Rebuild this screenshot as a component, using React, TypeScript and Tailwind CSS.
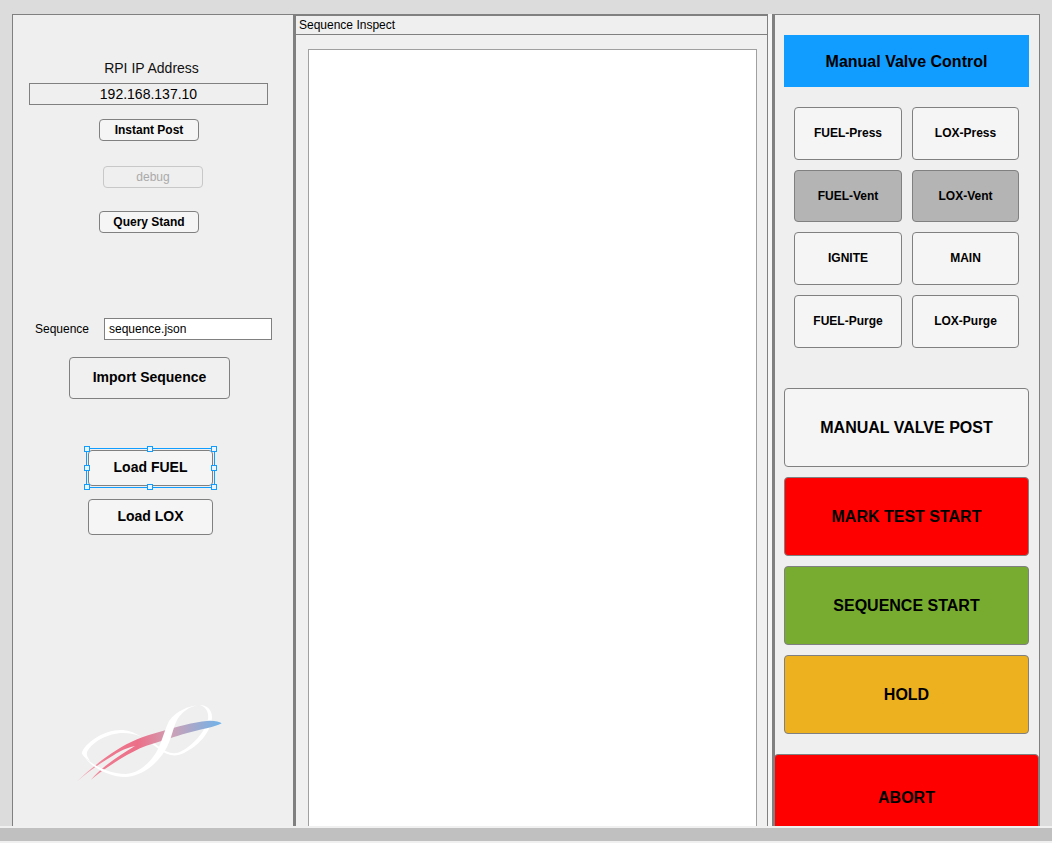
import React from 'react';

const valves = [
  { label: 'FUEL-Press', active: false, h: 'h-[53px] pb-[1px]' },
  { label: 'LOX-Press', active: false, h: 'h-[53px] pb-[1px]' },
  { label: 'FUEL-Vent', active: true, h: 'h-[52px]' },
  { label: 'LOX-Vent', active: true, h: 'h-[52px]' },
  { label: 'IGNITE', active: false, h: 'h-[53px] pb-[1px]' },
  { label: 'MAIN', active: false, h: 'h-[53px] pb-[1px]' },
  { label: 'FUEL-Purge', active: false, h: 'h-[53px] pb-[1px]' },
  { label: 'LOX-Purge', active: false, h: 'h-[53px] pb-[1px]' },
];

// selection handles around the Load FUEL button
const handles = [
  'left-[-3px] top-[-3px]',
  'left-[60px] top-[-3px]',
  'right-[-3px] top-[-3px]',
  'left-[-3px] top-[16px]',
  'right-[-3px] top-[16px]',
  'left-[-3px] bottom-[-3px]',
  'left-[60px] bottom-[-3px]',
  'right-[-3px] bottom-[-3px]',
];

const Logo = () => (
  <svg width="146" height="78" viewBox="0 0 146 78" className="block">
    <defs>
      <linearGradient id="swoosh" x1="0" y1="0" x2="1" y2="0">
        <stop offset="0.03" stopColor="#f4b0bd" />
        <stop offset="0.2" stopColor="#ee7a90" />
        <stop offset="0.42" stopColor="#ec6f88" />
        <stop offset="0.65" stopColor="#cfa0b5" />
        <stop offset="1" stopColor="#6db3ea" />
      </linearGradient>
    </defs>
    {/* thin part of the figure of eight */}
    <path
      d="M5.7 48 C9 38 28 24 47 25 C60 26 72 36 84 45 C92 51 100 52 108 48 C122 41 135 28 136 12 C136 4 130 0 124 0 C130 2 133 7 132 14 C129 28 116 41 104 47 C96 50 90 47 82 41 C70 32 58 28 47 28 C32 28 16 37 11 47 C10 50 12 53 14 56 C9 53 7 51 5.7 48 Z"
      fill="#ffffff"
    />
    {/* pink to blue swoosh */}
    <path
      d="M0.7 76.7 C12 66 26 54 40.7 45 C52 37 68 31 84 26.7 C100 22 118 17 131 16 C138 15.5 143 16.5 145.7 18.3 C142 20.5 136 22 130.7 23.3 C118 26 104 30 94 33.3 C82 37 72 40 64 43.3 C50 50 30 62 14.7 75 C24 64 40 52 59 41 C50 43 44 46 38 50 C24 58 12 67 0.7 76.7 Z"
      fill="url(#swoosh)"
    />
    {/* thick stroke of the eight, crosses over the swoosh */}
    <path
      d="M124 0 C113 1 106 7 101 15 C97 23 96 32 91 42 C84 56 68 71 50 72 C34 72 18 64 9 53 C20 62 34 69 50 69 C64 68 76 56 82 44 C86 36 89 24 93 16 C100 6 112 1 124 0 Z"
      fill="#ffffff"
    />
  </svg>
);

export default function App() {
  return (
    <div className="w-[1052px] h-[843px] overflow-hidden flex flex-col bg-[#dcdcdc] text-black font-['Liberation_Sans',Arial,sans-serif]">
      <div className="h-[826px] shrink-0 flex pt-[14px] pl-[12px] pr-[12px] overflow-hidden">
        {/* Left panel */}
        <div className="w-[281px] shrink-0 h-[830px] bg-[#efefef] border-l border-t border-[#808080] flex flex-col pl-[16px]">
          <div className="mt-[45px] w-[239px] pl-[6px] text-center text-[14px] leading-[16px] text-[#111]">RPI IP Address</div>
          <div className="mt-[7px] w-[239px] h-[22px] border border-[#808080] flex items-center justify-center text-[14px]">192.168.137.10</div>
          <button className="mt-[14px] ml-[70px] w-[100px] h-[22px] rounded-[4px] border border-[#808080] bg-[#f5f5f5] text-[12px] font-bold">Instant Post</button>
          <button className="mt-[25px] ml-[74px] w-[100px] h-[22px] rounded-[4px] border border-[#c8c8c8] bg-[#efefef] text-[12px] text-[#aaaaaa]">debug</button>
          <button className="mt-[23px] ml-[70px] w-[100px] h-[22px] rounded-[4px] border border-[#808080] bg-[#f5f5f5] text-[12px] font-bold">Query Stand</button>
          <div className="mt-[85px] flex items-center h-[22px] ml-[6px]">
            <span className="w-[69px] text-[12px]">Sequence</span>
            <div className="w-[168px] h-[22px] border border-[#808080] bg-white flex items-center pl-[4px] text-[12px]">sequence.json</div>
          </div>
          <button className="mt-[17px] ml-[40px] w-[161px] h-[42px] pb-[1px] rounded-[4px] border border-[#808080] bg-[#f0f0f0] text-[14px] font-bold">Import Sequence</button>
          <div className="relative mt-[49px] ml-[57px] w-[129px] h-[40px] border border-[#119dff] p-[1px]">
            <button className="block w-full h-full pb-[1px] rounded-[4px] border border-[#808080] bg-[#f5f5f5] text-[14px] font-bold">Load FUEL</button>
            {handles.map((pos) => (
              <span key={pos} className={`absolute ${pos} w-[6px] h-[6px] bg-[#eaf6ff] border border-[#119dff]`} />
            ))}
          </div>
          <button className="mt-[11px] ml-[59px] w-[125px] h-[36px] pb-[1px] rounded-[4px] border border-[#808080] bg-[#f5f5f5] text-[14px] font-bold">Load LOX</button>
          <div className="mt-[170px] ml-[47px]">
            <Logo />
          </div>
        </div>

        {/* Divider */}
        <div className="w-[3px] shrink-0 bg-[#808080]" />

        {/* Sequence Inspect */}
        <div className="w-[472px] shrink-0 h-[830px] bg-[#f0f0f0] border-t-2 border-r border-[#808080] flex flex-col">
          <div className="h-[19px] shrink-0 bg-[#efefef] border-b border-[#808080] pl-[3px] text-[12px] leading-[18px]">Sequence Inspect</div>
          <div className="mt-[14px] ml-[12px] w-[449px] flex-1 bg-white border-l border-r border-t border-[#a0a0a0]" />
        </div>

        {/* Gap and divider */}
        <div className="w-[4px] shrink-0 bg-[#f5f5f5]" />
        <div className="w-[3px] shrink-0 bg-[#808080]" />

        {/* Right panel */}
        <div className="w-[265px] shrink-0 h-[830px] bg-[#efefef] border-t border-r border-[#808080] flex flex-col pl-[9px] pr-[10px]">
          <div className="mt-[20px] h-[52px] pt-[1px] shrink-0 bg-[#119dff] flex items-center justify-center text-[16px] font-bold">Manual Valve Control</div>
          <div className="mt-[20px] ml-[10px] w-[225px] grid grid-cols-[108px_107px] gap-x-[10px] gap-y-[10px]">
            {valves.map((v) => (
              <button
                key={v.label}
                className={`${v.h} rounded-[4px] border border-[#808080] text-[12px] font-bold ${v.active ? 'bg-[#b4b4b4]' : 'bg-[#f5f5f5]'}`}
              >
                {v.label}
              </button>
            ))}
          </div>
          <button className="mt-[40px] h-[79px] shrink-0 rounded-[4px] border border-[#808080] bg-[#f5f5f5] text-[16px] font-bold">MANUAL VALVE POST</button>
          <button className="mt-[10px] h-[79px] shrink-0 rounded-[4px] border border-[#808080] bg-[#ff0000] text-[16px] font-bold">MARK TEST START</button>
          <button className="mt-[10px] h-[79px] shrink-0 rounded-[4px] border border-[#808080] bg-[#77ac30] text-[16px] font-bold">SEQUENCE START</button>
          <button className="mt-[10px] h-[79px] shrink-0 rounded-[4px] border border-[#808080] bg-[#edb120] text-[16px] font-bold">HOLD</button>
          <button className="mt-[20px] -ml-[10px] -mr-[10px] h-[86px] pt-[2px] shrink-0 rounded-[4px] border border-[#808080] bg-[#ff0000] text-[16px] font-bold">ABORT</button>
        </div>
      </div>

      {/* Scrollbar */}
      <div className="h-[2px] shrink-0 bg-[#f0f0f0]" />
      <div className="h-[13px] shrink-0 bg-[#c0c0c0]" />
      <div className="h-[2px] shrink-0 bg-[#f0f0f0]" />
    </div>
  );
}
